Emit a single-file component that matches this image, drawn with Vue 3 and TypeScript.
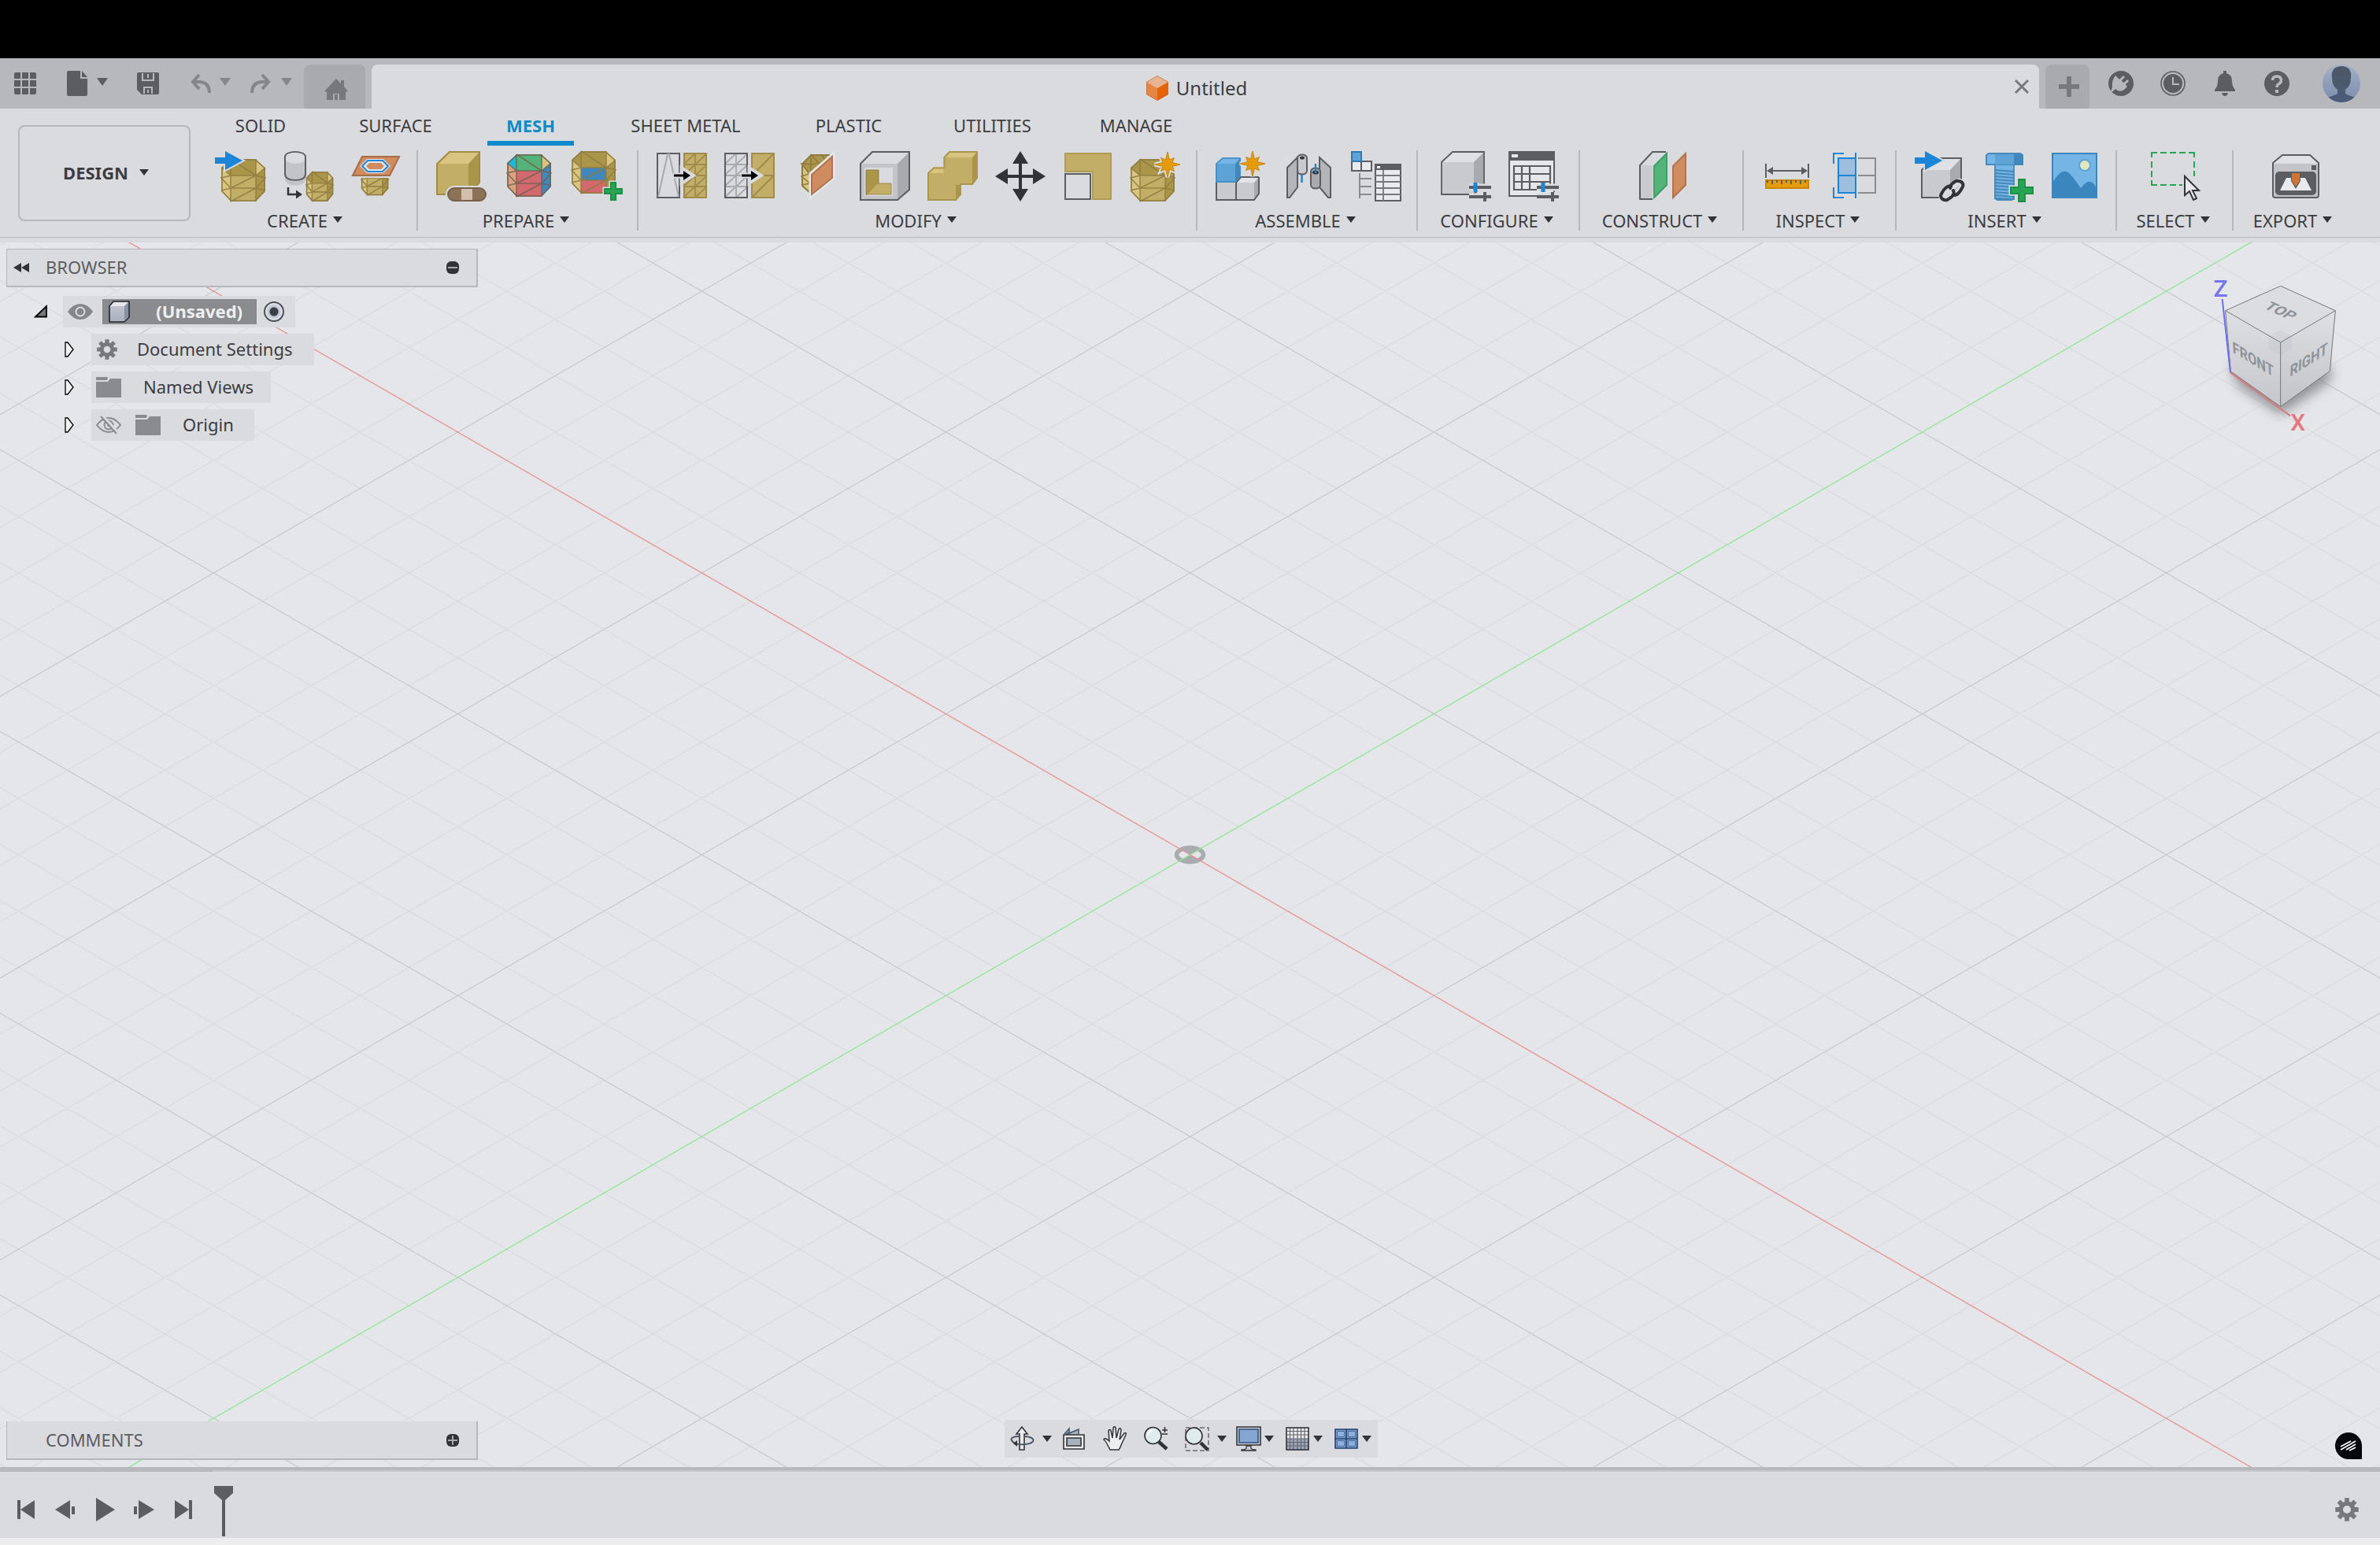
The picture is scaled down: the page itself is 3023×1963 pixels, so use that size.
<script setup lang="ts">
const BG = '#dadbdf'
const INK = '#5c5d61'
const DARK = '#323337'
const GOLD = '#c2ae67'
const GOLD_LIGHT = '#d9c57f'
const GOLD_DARK = '#aa9549'
const GOLD_EDGE = '#8f7c40'
const BLUE = '#1b86d8'

interface MeshColors { tl: string; top: string; tr: string; left: string; f1: string; f2: string; right: string }
const goldMesh: MeshColors = { tl: GOLD_DARK, top: GOLD_DARK, tr: GOLD_LIGHT, left: GOLD_LIGHT, f1: GOLD, f2: GOLD, right: GOLD_DARK }

/* Faceted barrel, 56 x 54 before scaling */
function mesh(x: number, y: number, sx: number, sy: number, c: MeshColors, edge = GOLD_EDGE): string {
  const p = (pts: string, fill: string) => `<polygon points="${pts}" fill="${fill}"/>`
  return `<g transform="translate(${x} ${y}) scale(${sx} ${sy})">` +
    p('0,11 12,21 12,54 0,41', c.left) + p('0,11 12,0 12,21', c.tl) + p('12,0 44,0 44,21 12,21', c.top) +
    p('44,0 56,11 44,21', c.tr) + p('56,11 56,41 44,54 44,21', c.right) +
    p('12,21 44,21 44,37 12,37', c.f1) + p('12,37 44,37 44,54 12,54', c.f2) +
    `<g fill="none" stroke="${edge}" stroke-width="1.6"><path vector-effect="non-scaling-stroke" stroke-opacity=".85" d="M12 0V54M44 0V54M12 21H44M12 37H44M12 37L44 21M12 54L44 37M12 0L44 21M0 11L12 21L0 24L12 37L0 40M56 11L44 21L56 24L44 37L56 40"/>` +
    `<path vector-effect="non-scaling-stroke" d="M12.5 1H43.500L55 11.500V41L43.500 53H12.500L1 41V11.500Z"/></g></g>`
}

function star(cx: number, cy: number): string {
  const pts: string[] = []
  for (let i = 0; i < 16; i++) {
    const r = i % 2 ? 6.5 : i % 4 ? 12 : 16
    const a = (i * Math.PI) / 8
    pts.push(`${(cx + r * Math.sin(a)).toFixed(1)},${(cy - r * Math.cos(a)).toFixed(1)}`)
  }
  const s = pts.join(' ')
  return `<polygon points="${s}" fill="${BG}" stroke="${BG}" stroke-width="5"/><polygon points="${s}" fill="#e59b0b" stroke="#c8860a"/>`
}

const plus = (x: number, y: number, s: number) => {
  const a = s * 0.36, b = s * 0.64
  const d = `M${x + a} ${y}H${x + b}V${y + a}H${x + s}V${y + b}H${x + b}V${y + s}H${x + a}V${y + b}H${x}V${y + a}H${x + a}Z`
  return `<path d="${d}" fill="${BG}" stroke="${BG}" stroke-width="5"/><path d="${d}" fill="#27a553" stroke="#1b8f45" stroke-width="2"/>`
}

const bigArrow = `<path d="M0 8H13V0L35 12L13 24V16H0Z" fill="${BG}" stroke="${BG}" stroke-width="4"/><path d="M0 8H13V0L35 12L13 24V16H0Z" fill="${BLUE}"/>`
const smallArrow = `<path d="M21 31H36M33 24L44 31L33 38Z" stroke="${BG}" stroke-width="7" fill="${BG}"/><path d="M22 31H36" stroke="#000" stroke-width="3"/><path d="M34 25L43 31L34 37Z" fill="#000"/>`
const denseGrid = (x: number) => {
  const xs = [x, x + 15], ys = [3, 17, 31, 45]
  let d = `M${x + 15} 3V59M${x} 17H${x + 30}M${x} 31H${x + 30}M${x} 45H${x + 30}`
  for (const a of xs) for (const b of ys) d += `M${a} ${b + 14}L${a + 15} ${b}`
  return d
}
const sliders = `<path d="M36 46H64M36 58H64M56 52V64M44 40V52" stroke="${BG}" stroke-width="9"/><path d="M36 46H64M36 58H64" stroke="${INK}" stroke-width="4"/><path d="M56 52V64" stroke="${INK}" stroke-width="4"/><path d="M44 40V52" stroke="${BLUE}" stroke-width="5"/>`

const art: Record<string, string> = {
  meshInsert: mesh(8, 10, 1, 1, goldMesh) + bigArrow,
  tessellate: `<path d="M3 8V36C3 46 29 46 29 36V8Z" fill="#c3c4c8"/><ellipse cx="16" cy="9" rx="13" ry="7" fill="${BG}"/><path d="M3 9C3 -1 29 -1 29 9V34C29 40 24 43 16 43S3 40 3 34Z" transform="translate(0 -.5) scale(1 .87)" fill="none" stroke="${INK}" stroke-width="2"/>` +
    mesh(30, 26, 0.61, 0.7, goldMesh) + `<path d="M7 46V55H18" fill="none" stroke="${DARK}" stroke-width="2.500"/><path d="M17 49.500L25 55L17 60.500Z" fill="${DARK}"/>`,
  curveMesh: mesh(14, 20, 0.61, 0.67, goldMesh) + `<path d="M10 4H66L52 34H-2Z" fill="${BG}"/><path d="M15 7H62L50 31H3Z" fill="#d08c5f" stroke="#a66d48" stroke-width="2"/><path d="M22 12H41L48 19L41 26H22L15 19Z" fill="#dbe4ec" stroke="#e6e7ea" stroke-width="4"/><path d="M22 12H41L48 19L41 26H22L15 19Z" fill="none" stroke="${BLUE}" stroke-width="2"/><path d="M24 15H39L43 19L39 23H24L20 19Z" fill="#d08c5f"/>`,
  repair: `<path d="M0 16H41V56H0Z" fill="${GOLD}"/><path d="M0 16L16 0H56L41 16Z" fill="${GOLD_LIGHT}"/><path d="M41 16L56 0V40L41 56Z" fill="${GOLD_DARK}"/><path d="M1 16.500L17 1H55V40L41 55H1Z" fill="none" stroke="#a08b48" stroke-width="2"/><rect x="12" y="44" width="54" height="22" rx="11" fill="${BG}"/><rect x="15" y="47" width="48" height="16" rx="8" fill="#8c7355" stroke="#77604a" stroke-width="2"/><rect x="32" y="48" width="14" height="14" fill="#d2bfad"/>`,
  faceGroups: mesh(4, 4, 1, 1, { tl: '#15bcd4', top: '#54b378', tr: GOLD_LIGHT, left: '#dda27c', f1: '#d3686e', f2: '#d3686e', right: '#3f87bd' }, '#6f6353'),
  addGroup: mesh(0, 0, 1, 1, { ...goldMesh, f1: '#3f87bd', f2: '#d3686e' }) + plus(42, 40, 22),
  remesh: `<rect x="1" y="3" width="28" height="56" fill="${BG}" stroke="${INK}" stroke-width="2"/><path d="M2 58L14 4H16L28 58" fill="none" stroke="#a9aaae" stroke-width="2"/><rect x="35" y="3" width="28" height="56" fill="${GOLD}" stroke="#a08c4c" stroke-width="2"/><path d="${denseGrid(34)}" stroke="#a08c4c" stroke-width="1.800"/>` + smallArrow,
  reduce: `<path d="${denseGrid(0)}" stroke="#a9aaae" stroke-width="1.800"/><rect x="1" y="3" width="28" height="56" fill="none" stroke="${INK}" stroke-width="2"/><rect x="35" y="3" width="28" height="56" fill="${GOLD}" stroke="#a08c4c" stroke-width="2"/><path d="M34 31H64M35 31L63 3M35 59L63 31" stroke="#a08c4c" stroke-width="2"/>` + smallArrow,
  planeCut: `<path d="M12 16L24 30V54L12 44Z" fill="${GOLD_LIGHT}"/><path d="M12 16L24 4H48L23 30Z" fill="${GOLD_DARK}"/><path d="M24 4V28L12 32L23 41L12 43M24 17L34 15L24 4M24 17L12 16L23 30M36 4L42 10" stroke="${GOLD_EDGE}" stroke-width="1.600" fill="none"/><path d="M13 16.500L24.500 5H48M13 16V44L23 53" stroke="${GOLD_EDGE}" stroke-width="2" fill="none"/><path d="M24 29L52 5V34L24 57Z" fill="${BG}" stroke="#e6e7ea" stroke-width="5"/><path d="M25 30L51 7V34L25 55Z" fill="#d08c5f" stroke="#b0744e" stroke-width="2"/>`,
  shell: `<path d="M1 16L16 1H63V49L48 62H1Z" fill="${BG}"/><path d="M48 16L63 1V49L48 62Z" fill="#a9aaae"/><path d="M1 16H48V62H1Z" fill="#c3c4c8"/><path d="M6 21H42V57H6Z" fill="${BG}"/><path d="M8 24H24V41L8 56Z" fill="${GOLD_DARK}" stroke="#8f7c40"/><path d="M22 41H40V55H9Z" fill="${GOLD}" stroke="#a08c4c"/><path d="M1 16L16 1H63V49L48 62H1Z" fill="none" stroke="${INK}" stroke-width="2"/>`,
  combine: `<path d="M0 28L8 20.500H20.500V8L28 0H64V34L57 43H43V55L36 63H0Z" fill="${GOLD}"/><path d="M0 28L8 20.500H20.500V28ZM20.500 8L28 0H64L57 8Z" fill="${GOLD_LIGHT}"/><path d="M57 8L64 0V34L57 43ZM36 43H43V55L36 63Z" fill="${GOLD_DARK}"/><path d="M1 28L8 21.500H21.500V8L28 1H63V34L57 42H42V55L36 62H1Z" fill="none" stroke="#ab9650" stroke-width="2"/>`,
  move: `<path d="M32 10V54M10 32H54" stroke="${DARK}" stroke-width="4"/><path d="M32 0L42 16H22ZM32 64L42 48H22ZM0 32L16 22V42ZM64 32L48 22V42Z" fill="${DARK}"/>`,
  scale: `<path d="M3 3H61V61H38V26H3Z" fill="${GOLD}" stroke="#b19c55" stroke-width="2"/><rect x="3" y="29" width="32" height="32" fill="${BG}" stroke="${INK}" stroke-width="2"/>`,
  convert: mesh(0, 10, 1, 1, goldMesh) + star(47, 17),
  newComponent: `<path d="M1 40H26L32 33H55V54L48 62H1Z" fill="#c9cace"/><path d="M26 40L32 33H55L49 40Z" fill="#e3e4e7"/><path d="M49 40L55 33V54L49 62Z" fill="#a9aaae"/><path d="M1 40V62H49L55 54V33M26 62V40L32 33H55" fill="none" stroke="${INK}" stroke-width="2"/><path d="M0 16H25V40H0Z" fill="#5ea3d6"/><path d="M0 16L9 8H32L25 16Z" fill="#74b5e6"/><path d="M25 16L32 8V32L25 40Z" fill="#3f87bd"/><path d="M1 16L9 9H31M1 16V39H25L31 32V9" fill="none" stroke="#3f8cc4" stroke-width="1.600"/>` + star(47, 16),
  joint: `<g stroke="${INK}" stroke-width="2"><path d="M5 21L18 8V46L8 59H5Z" fill="#b4b5b9"/><path d="M18 9C18 3 30 3 30 9V25C30 31 18 31 18 25Z" fill="#c9cace"/><path d="M60 21L46 8V46L57 59H60Z" fill="#b4b5b9"/><path d="M35 26C35 20 47 20 47 26V43C47 49 35 49 35 43Z" fill="#a9aaae"/></g><ellipse cx="24" cy="8.500" rx="3" ry="2" fill="${DARK}"/><ellipse cx="41" cy="27" rx="4" ry="2.500" fill="${DARK}"/><path d="M23.500 30V40M41 16V28" stroke="${BLUE}" stroke-width="2.500"/>`,
  structure: `<path d="M1 13H26V25H1ZM13 13V25" fill="#e9eaee" stroke="${INK}" stroke-width="2"/><rect x="1" y="1" width="12" height="12" fill="#5ea3d6" stroke="#2f79b3" stroke-width="2"/><path d="M11 28V60M11 35H26M11 45H26M11 55H26" stroke="#8a8b8f" stroke-width="2"/><rect x="31" y="17" width="32" height="46" fill="#e9eaee" stroke="${INK}" stroke-width="2"/><path d="M30 16H64V24H30Z" fill="${INK}"/><path d="M33 19H37V22H33Z" fill="#e9eaee"/><path d="M41 24V63M31 31H63M31 39H63M31 47H63M31 55H63" stroke="#77787c" stroke-width="1.800"/>`,
  configure: `<path d="M1 14H42V55H1Z" fill="#c9cace"/><path d="M1 14L15 1H55L42 14Z" fill="#e0e1e4"/><path d="M42 14L55 1V42L42 55Z" fill="#a9aaae"/><path d="M1 14L15 1H55V42L42 55H1Z" fill="none" stroke="${INK}" stroke-width="1.800"/>` + sliders,
  configTable: `<path d="M1 2H58V57H1Z" fill="#e6e7ea" stroke="${INK}" stroke-width="2"/><path d="M0 0H59V12H0Z" fill="${INK}"/><path d="M4 4H12V8H4Z" fill="#e6e7ea"/><path d="M7 19H53V49H7ZM7 29H53M7 39H53M17 19V49M27 19V49" fill="none" stroke="${INK}" stroke-width="2.200"/>` + sliders,
  offsetPlane: `<path d="M3 18H19V61H3Z" fill="#c9cace"/><path d="M3 18L19 1H38L20 18Z" fill="${BG}"/><path d="M36 1H19L3 18V61H19" fill="none" stroke="${INK}" stroke-width="2"/><path d="M21 19L37 3V43L21 59Z" fill="#54b378" stroke="#3f9f66" stroke-width="2"/><path d="M45 19L61 3V43L45 59Z" fill="#d08c5f" stroke="#b0744e" stroke-width="2"/>`,
  measure: `<path d="M5 16V34M59 16V34" stroke="${INK}" stroke-width="2"/><path d="M8 25H56" stroke="${INK}" stroke-width="2"/><path d="M6 25L14 20V30ZM58 25L50 20V30Z" fill="${INK}"/><rect x="5" y="37" width="54" height="10" fill="#e59b0b" stroke="#c8860a" stroke-width="2"/><path d="M7 37V40M13 37V42M19 37V40M25 37V42M31 37V40M37 37V42M43 37V40M49 37V42M55 37V40" stroke="${INK}" stroke-width="2"/>`,
  section: `<path d="M36 9H58V53H36M36 31H58" fill="none" stroke="#8a8b8f" stroke-width="2"/><path d="M11 9H33V53H11Z" fill="#9dbfdd" stroke="${BLUE}" stroke-width="2"/><path d="M11 31H33M33 2V60M18 3H5V16M5 46V59H18" fill="none" stroke="${BLUE}" stroke-width="2"/>`,
  insertDerive: `<path d="M9 24H45V59H9Z" fill="#c9cace"/><path d="M9 24L24 9H59L45 24Z" fill="#e0e1e4"/><path d="M45 24L59 9V45L45 59Z" fill="#a9aaae"/><path d="M9 59V24L24 9H59V45L45 59Z" fill="none" stroke="${INK}" stroke-width="2"/>` + bigArrow +
    `<g fill="none" stroke-linecap="round"><path d="M47 46L53 41Q57 38 60 41T60 48L52 55M48 45L41 50Q34 55 35 59T42 60L50 54" stroke="${BG}" stroke-width="9"/><g stroke="${DARK}" stroke-width="4"><path d="M45 47C43 44 52 37 55 38C61 38 63 43 60 47C58 51 54 56 50 56"/><path d="M49 50C52 56 45 60 41 62C36 63 31 59 34 54C37 48 42 43 46 45"/></g></g>`,
  fastener: `<path d="M16 17H40V60L37 62H19L16 60Z" fill="#74b5e6" stroke="#4489b9" stroke-width="1.800"/><path d="M15 24L41 26M15 28L41 30M15 32L41 34M15 36L41 38M15 40L41 42M15 44L41 46M15 48L41 50M15 52L41 54M15 56L41 58M15 60L41 61" stroke="#4489b9" stroke-width="2"/><path d="M5 5L8 3H48L51 5V17H5Z" fill="#74b5e6" stroke="#4489b9" stroke-width="2"/><path d="M16 4H40V17H16Z" fill="#5ea3d6"/><path d="M40 4H48L51 6V17H40Z" fill="#3f87bd"/>` + plus(36, 36, 28),
  canvas: `<rect x="3" y="3" width="56" height="56" fill="#74b5e6" stroke="#3a86bd" stroke-width="2"/><path d="M3 40C12 26 16 25 20 26C26 27 32 38 39 47C44 41 47 38 51 39C54 39 57 43 59 48V59H3Z" fill="#3a86bd"/><circle cx="44" cy="18" r="7" fill="#e3e4c0" stroke="#5ea3d6" stroke-width="2"/>`,
  select: `<path d="M1 8V2H8M12 2H20M24 2H32M36 2H44M48 2H55V8M55 13V21M55 25V32M1 13V21M1 25V33M1 37V43H8M12 43H20M24 43H32M36 43H40" fill="none" stroke="#27a553" stroke-width="2"/><path d="M43 32V56L49 51L54 62L58 60L53 50H61Z" fill="#e9eaee" stroke="${DARK}" stroke-width="2"/>`,
  export: `<path d="M3 15L15 5H50L61 15V56Q61 59 58 59H6Q3 59 3 56Z" fill="#e0e1e4"/><path d="M3 16H61V56Q61 59 58 59H6Q3 59 3 56Z" fill="#c3c4c8"/><path d="M3 15L15 5H50L61 15V56Q61 59 58 59H6Q3 59 3 56Z" fill="none" stroke="${INK}" stroke-width="2"/><rect x="52" y="18" width="6" height="6" fill="${INK}"/><rect x="6" y="26" width="52" height="30" rx="5" fill="${INK}"/><path d="M20 34H26V38L32 48L38 38V34H44L52 50H12Z" fill="#e9eaee"/><path d="M27 28H37V38L32 45L27 38Z" fill="#cf7434"/>`,

  apps: `<g fill="${INK}"><rect x="0" y="0" width="28" height="28" rx="2"/></g><path d="M9 0V28M19 0V28M0 9H28M0 19H28" stroke="#b7b8bc" stroke-width="2"/>`,
  file: `<path d="M3 -2H18V8H27V28Q27 30 25 30H3Q1 30 1 28V0Q1 -2 3 -2Z" fill="${INK}"/><path d="M20 -2L27 6H20Z" fill="${INK}"/>`,
  save: `<path d="M2 0H26Q28 0 28 2V26Q28 28 26 28H6L0 22V2Q0 0 2 0Z" fill="${INK}"/><path d="M7 1V10H21V1M14 2V7M9 27V19H19V27M14 22V26" fill="none" stroke="#b7b8bc" stroke-width="2"/>`,
  undo: `<path d="M13 3L5 12L13 21M5 12H14Q26 13 26 26" fill="none" stroke="#85868a" stroke-width="4"/>`,
  redo: `<path d="M15 3L23 12L15 21M23 12H14Q2 13 2 26" fill="none" stroke="#85868a" stroke-width="4"/>`,

  plug: `<circle cx="16" cy="16" r="16" fill="${INK}"/><path d="M9 6L13 10Q16 11 24 20L20 24Q14 28 9 23L2 29L5 21Q4 12 9 6Z" fill="#b7b8bc"/><path d="M15 12L20 7M20 17L25 12" stroke="#b7b8bc" stroke-width="3"/>`,
  clock: `<circle cx="16" cy="16" r="15" fill="none" stroke="${INK}" stroke-width="1.600"/><circle cx="16" cy="16" r="12" fill="${INK}"/><path d="M16 8V17H24" fill="none" stroke="#b7b8bc" stroke-width="2"/>`,
  bell: `<path d="M14 0H18V3Q25 5 25 13Q25 20 29 24V26H3V24Q7 20 7 13Q7 5 14 3ZM12 28H20Q19 32 16 32T12 28Z" fill="${INK}"/>`,
  help: `<circle cx="16" cy="16" r="16" fill="${INK}"/><path d="M10.500 12Q10.500 7 16 7T21.500 12Q21.500 15 18 17Q16 18 16 21" fill="none" stroke="#b7b8bc" stroke-width="3.500"/><path d="M14 24H18V28H14Z" fill="#b7b8bc"/>`,

  first: `<path d="M5 4H9V28H5ZM27 4V28L9 16Z" fill="${INK}"/>`,
  prev: `<path d="M3 16L22 4V28ZM24 12H28V22H24Z" fill="${INK}"/>`,
  play: `<path d="M5 1L29 16L5 31Z" fill="${INK}"/>`,
  next: `<path d="M29 16L9 4V28ZM3 12H7V22H3Z" fill="${INK}"/>`,
  last: `<path d="M23 4H27V28H23ZM5 4V28L23 16Z" fill="${INK}"/>`,

  orbit: `<path d="M13 30V10H9L16 1L23 10H19V30Z" fill="#e9eaee" stroke="${DARK}" stroke-width="1.600"/><path d="M20 13C34 14 34 22 20 23C12 24 5 22 3 18C1 15 6 13 12 13" fill="none" stroke="#4c5866" stroke-width="2"/><path d="M5 22L10 18V26Z" fill="${DARK}"/>`,
  lookAt: `<path d="M4 11L10 3L12 7L22 4V11Z" fill="#a9b2bb"/><path d="M4 10L10 3V8L6 10M8 10L22 4V10" fill="none" stroke="#4c5866" stroke-width="1.500"/><path d="M3 11H29V29H3Z" fill="#e9eaee" stroke="${DARK}" stroke-width="1.600"/><path d="M7 15H25V25H7Z" fill="#a9b2bb" stroke="${DARK}" stroke-width="1.600"/>`,
  pan: `<path d="M10 30C7 24 5 19 2 17C2 15 5 15 9 19L8 6C8 4 11 4 11 6L13 15L14 3C14 0 17 0 17 3L18 15L21 4C22 2 24 3 24 5L22 17L28 9C30 8 31 9 30 11L24 24C23 27 22 29 21 30Z" fill="#edeef0" stroke="${DARK}" stroke-width="1.500"/>`,
  zoom: `<path d="M20 20L30 29" stroke="${DARK}" stroke-width="4.500"/><circle cx="12.500" cy="12" r="10.500" fill="#dfebec" stroke="${DARK}" stroke-width="1.600"/><path d="M6 11Q7 6 12 5" stroke="#fff" stroke-width="2.500" fill="none"/><path d="M24 5H31M27.500 1V8M24 10H31" stroke="${DARK}" stroke-width="1.600"/>`,
  fit: `<rect x="2" y="2" width="29" height="29" fill="none" stroke="#6a6b6f" stroke-width="1.500" stroke-dasharray="6 3"/><path d="M21 21L30 30" stroke="${DARK}" stroke-width="4.500"/><circle cx="12.500" cy="12.500" r="10.500" fill="#dfebec" stroke="${DARK}" stroke-width="1.600"/>`,
  display: `<path d="M1 1H31V24H1Z" fill="#c9cace" stroke="${DARK}" stroke-width="1.600"/><path d="M4 4H28V21H4Z" fill="#86a6d2" stroke="#2f4f80" stroke-width="1.600"/><path d="M13 25H19V28Q20 30 25 30V31H7V30Q12 30 13 28Z" fill="#c9cace" stroke="${DARK}" stroke-width="1.300"/>`,
  grid: `<rect x="2" y="2" width="28" height="28" fill="#e9eaee"/><path d="M2 16H30V30H2Z" fill="#9aa5ba"/><path d="M6.500 2V30M11 2V30M16 2V30M20.500 2V30M25 2V30M2 6.500H30M2 11H30M2 16H30M2 20.500H30M2 25H30" stroke="#66676d" stroke-width="1.200"/><rect x="2" y="2" width="28" height="28" fill="none" stroke="${DARK}" stroke-width="1.600"/>`,
  layout: `<path d="M2 4H30V28H2Z" fill="#7f9fc9" stroke="#20406f" stroke-width="1.600"/><path d="M16 4V28M2 16H30" stroke="#20406f" stroke-width="1.600"/><path d="M4.500 6.500H13.500V13.500H4.500ZM18.500 6.500H27.500V13.500H18.500ZM4.500 18.500H13.500V25.500H4.500ZM18.500 18.500H27.500V25.500H18.500Z" fill="#8eb0dc" stroke="#4a6da0"/>`,
}

const fileTools = [
  { icon: 'apps', label: 'Data panel', width: 66, caret: false, dim: false },
  { icon: 'file', label: 'File', width: 90, caret: true, dim: false },
  { icon: 'save', label: 'Save', width: 66, caret: false, dim: false },
  { icon: 'undo', label: 'Undo', width: 78, caret: true, dim: true },
  { icon: 'redo', label: 'Redo', width: 68, caret: true, dim: true },
]
const statusTools = [
  { icon: 'plug', label: 'Extensions' },
  { icon: 'clock', label: 'Job status' },
  { icon: 'bell', label: 'Notifications' },
  { icon: 'help', label: 'Help' },
]
const ribbonTabs = [
  { name: 'SOLID', width: 110 },
  { name: 'SURFACE', width: 141 },
  { name: 'MESH', width: 110 },
  { name: 'SHEET METAL', width: 192 },
  { name: 'PLASTIC', width: 130 },
  { name: 'UTILITIES', width: 143 },
  { name: 'MANAGE', width: 130 },
]
const activeTab = 'MESH'
const groups = [
  { name: 'CREATE', width: 282, tools: ['meshInsert', 'tessellate', 'curveMesh'] },
  { name: 'PREPARE', width: 280, tools: ['repair', 'faceGroups', 'addGroup'] },
  { name: 'MODIFY', width: 710, tools: ['remesh', 'reduce', 'planeCut', 'shell', 'combine', 'move', 'scale', 'convert'] },
  { name: 'ASSEMBLE', width: 280, tools: ['newComponent', 'joint', 'structure'] },
  { name: 'CONFIGURE', width: 206, tools: ['configure', 'configTable'] },
  { name: 'CONSTRUCT', width: 208, tools: ['offsetPlane'] },
  { name: 'INSPECT', width: 194, tools: ['measure', 'section'] },
  { name: 'INSERT', width: 280, tools: ['insertDerive', 'fastener', 'canvas'] },
  { name: 'SELECT', width: 148, tools: ['select'] },
  { name: 'EXPORT', width: 154, tools: ['export'] },
]
const navTools = [
  { icon: 'orbit', kind: 'wide' }, { icon: 'lookAt', kind: 'plain' }, { icon: 'pan', kind: 'plain' },
  { icon: 'zoom', kind: 'plain' }, { icon: 'fit', kind: 'wide' }, { icon: 'display', kind: 'tight' },
  { icon: 'grid', kind: 'tight' }, { icon: 'layout', kind: 'tight' },
]
const playback = ['first', 'prev', 'play', 'next', 'last']

/* Isometric ground grid around the origin; every fifth line is major */
const STEP = 71.6
const SLOPE = 0.5774
const REACH = 4000
const range = Array.from({ length: 101 }, (_, i) => i - 50).filter((k) => k !== 0)
const gridPath = (ks: number[]) =>
  ks.map((k) => {
    const c = k * STEP
    const h = REACH * SLOPE
    return `M${-REACH} ${(c - h).toFixed(1)}L${REACH} ${(c + h).toFixed(1)}M${-REACH} ${(c + h).toFixed(1)}L${REACH} ${(c - h).toFixed(1)}`
  }).join('')
const minorLines = gridPath(range.filter((k) => k % 5 !== 0))
const majorLines = gridPath(range.filter((k) => k % 5 === 0))
const axisEnd = REACH * SLOPE

const gearPath = (() => {
  const pts: string[] = []
  for (let i = 0; i < 8; i++) {
    for (const [off, r] of [[-16, 10.5], [-11, 15], [11, 15], [16, 10.5]] as const) {
      const a = ((i * 45 + off) * Math.PI) / 180
      pts.push(`${(16 + r * Math.sin(a)).toFixed(1)} ${(16 - r * Math.cos(a)).toFixed(1)}`)
    }
  }
  return `M${pts.join('L')}ZM16 11a5 5 0 1 0 0 10a5 5 0 1 0 0 -10Z`
})()
</script>

<template>
  <div class="app">
    <div class="bezel"></div>

    <header class="titlebar">
      <nav class="file-tools" aria-label="File">
        <button v-for="t in fileTools" :key="t.icon" class="file-tool" :style="{ width: t.width + 'px' }" :aria-label="t.label">
          <svg class="i28" viewBox="0 0 28 28" v-html="art[t.icon]"></svg>
          <span v-if="t.caret" class="caret-lg" :class="{ dim: t.dim }"></span>
        </button>
      </nav>
      <button class="side-tab home" aria-label="Home">
        <svg width="32" height="28" viewBox="0 0 32 28"><path d="M16 0L22 6V2H26V10L31 16L28 17V27H20V19H12V27H4V17L1 16Z" fill="#77787c" /><path d="M14 20H18V27H14Z" fill="#77787c" /></svg>
      </button>
      <div class="doc-tab">
        <div class="doc-title">
          <svg width="28" height="32" viewBox="0 0 28 32"><path d="M14 0L28 8L14 16L0 8Z" fill="#e6b493" /><path d="M0 8L14 16V32L0 24Z" fill="#e58744" /><path d="M28 8L14 16V32L28 24Z" fill="#e5640a" /><path d="M14 .5L27.500 8.200V23.800L14 31.500L.5 23.800V8.200Z" fill="none" stroke="#c96a2c" stroke-opacity=".7" /></svg>
          <span>Untitled</span>
        </div>
        <button class="close" aria-label="Close">
          <svg width="20" height="20" viewBox="0 0 20 20"><path d="M2 2L18 18M18 2L2 18" stroke="#77787c" stroke-width="3" /></svg>
        </button>
      </div>
      <button class="side-tab new" aria-label="New tab">
        <svg width="26" height="26" viewBox="0 0 26 26"><path d="M13 0V26M0 13H26" stroke="#77787c" stroke-width="6" /></svg>
      </button>
      <div class="status-tools">
        <button v-for="s in statusTools" :key="s.icon" :aria-label="s.label">
          <svg class="i32" viewBox="0 0 32 32" v-html="art[s.icon]"></svg>
        </button>
        <button class="avatar" aria-label="Account">
          <svg width="48" height="48" viewBox="0 0 48 48">
            <defs>
              <linearGradient id="av" x1="0" y1="0" x2="0" y2="1"><stop offset="0" stop-color="#a2b1c8" /><stop offset="1" stop-color="#7b8cab" /></linearGradient>
              <linearGradient id="avh" x1="0" y1="0" x2="0" y2="1"><stop offset="0" stop-color="#4c5664" /><stop offset="1" stop-color="#4b5c7a" /></linearGradient>
              <clipPath id="avc"><circle cx="24" cy="24" r="24" /></clipPath>
            </defs>
            <g clip-path="url(#avc)"><rect width="48" height="48" fill="url(#av)" /><path d="M19 32Q12 27 12 17Q10 3 24 2Q38 3 36 17Q36 27 29 32V37Q34 40 43 42V48H5V42Q14 40 19 37Z" fill="url(#avh)" /></g>
          </svg>
        </button>
      </div>
    </header>

    <section class="ribbon">
      <button class="workspace">DESIGN <span class="caret"></span></button>
      <div class="ribbon-main">
        <nav class="tabs" aria-label="Toolbar tabs">
          <button v-for="t in ribbonTabs" :key="t.name" :class="{ active: t.name === activeTab }" :style="{ width: t.width + 'px' }">{{ t.name }}</button>
        </nav>
        <div class="groups">
          <div v-for="g in groups" :key="g.name" class="group" :style="{ width: g.width + 'px' }">
            <div class="tools">
              <button v-for="i in g.tools" :key="i" :aria-label="i">
                <svg class="i64" viewBox="0 0 64 64" v-html="art[i]"></svg>
              </button>
            </div>
            <button class="group-label">{{ g.name }}<span class="caret"></span></button>
          </div>
        </div>
      </div>
    </section>

    <main class="viewport">
      <svg class="ground" width="100%" height="100%" aria-hidden="true">
        <svg x="50%" y="50%" overflow="visible">
          <g fill="none">
            <path :d="minorLines" stroke="#dadce0" stroke-width="1.300" />
            <path :d="majorLines" stroke="#c8cace" stroke-width="1.300" />
            <ellipse rx="17" ry="9" stroke="#a9abaf" stroke-width="5.500" />
            <path d="M0 0L-12 -7Q0 -11 12 -7ZM0 0L-12 7Q0 11 12 7Z" fill="#a9abaf" />
            <path :d="`M${-REACH} ${-axisEnd}L${REACH} ${axisEnd}`" stroke="#e99296" stroke-width="1.300" />
            <path :d="`M${-REACH} ${axisEnd}L${REACH} ${-axisEnd}`" stroke="#92e695" stroke-width="1.300" />
          </g>
        </svg>
      </svg>

      <aside class="browser">
        <div class="panel">
          <svg class="rewind" width="20" height="12" viewBox="0 0 20 12"><path d="M0 6L10 0V12ZM10 6L20 0V12Z" fill="#323337" /></svg>
          <span class="panel-name">BROWSER</span>
          <button aria-label="Collapse"><svg width="16" height="16" viewBox="0 0 16 16"><rect width="16" height="16" rx="6" fill="#323337" /><path d="M2 8H14" stroke="#a9aaae" stroke-width="2" /></svg></button>
        </div>
        <ul class="tree">
          <li class="root">
            <svg class="twist" width="16" height="16" viewBox="0 0 16 16"><path d="M1 14.500L15 1V14.500Z" fill="#77787c" stroke="#000" stroke-width="1.800" /></svg>
            <div class="node">
              <svg width="32" height="20" viewBox="0 0 32 20"><path d="M0 10Q7 0 16 0T32 10Q25 20 16 20T0 10Z" fill="#85868a" /><ellipse cx="16" cy="10" rx="5.500" ry="5.500" fill="none" stroke="#dadbdf" stroke-width="2" /></svg>
              <span class="picked">
                <svg width="28" height="28" viewBox="0 0 28 28"><defs><linearGradient id="cb" x1="0" y1="0" x2="0" y2="1"><stop offset="0" stop-color="#c5cad2" /><stop offset="1" stop-color="#a9b0bd" /></linearGradient></defs><path d="M1 7L6 1H26V21L20 27H1Z" fill="url(#cb)" stroke="#22262c" stroke-width="1.600" stroke-linejoin="round" /><path d="M2 7L7 2H25L20 7Z" fill="#e6e8ec" /><path d="M20 7L25 2V21L20 26Z" fill="#88919f" /></svg>
                <b>(Unsaved)</b>
              </span>
              <input type="radio" name="active-component" checked aria-label="Activate component" />
            </div>
          </li>
          <li>
            <svg class="twist" width="12" height="20" viewBox="0 0 12 20"><path d="M1 1H4L11 10L4 19H1Z" fill="#f0f1f3" stroke="#000" stroke-width="1.300" /></svg>
            <div class="node settings">
              <svg width="28" height="28" viewBox="0 0 32 32"><path :d="gearPath" fill="#77787c" fill-rule="evenodd" /></svg>
              <span>Document Settings</span>
            </div>
          </li>
          <li>
            <svg class="twist" width="12" height="20" viewBox="0 0 12 20"><path d="M1 1H4L11 10L4 19H1Z" fill="#f0f1f3" stroke="#000" stroke-width="1.300" /></svg>
            <div class="node views">
              <svg width="32" height="26" viewBox="0 0 32 26"><path d="M0 0H13Q16 0 14 4H0ZM0 6H15L18 2H32V26H0Z" fill="#8a8b8f" /></svg>
              <span>Named Views</span>
            </div>
          </li>
          <li>
            <svg class="twist" width="12" height="20" viewBox="0 0 12 20"><path d="M1 1H4L11 10L4 19H1Z" fill="#f0f1f3" stroke="#000" stroke-width="1.300" /></svg>
            <div class="node origin">
              <svg width="32" height="22" viewBox="0 0 32 22"><path d="M1 11Q8 2 16 2T31 11Q24 20 16 20T1 11Z" fill="none" stroke="#8a8b8f" stroke-width="2" /><circle cx="16" cy="11" r="5.500" fill="none" stroke="#8a8b8f" stroke-width="2" /><circle cx="16" cy="11" r="2" fill="#8a8b8f" /><path d="M8 -1L28 20" stroke="#dadbdf" stroke-width="3" /><path d="M6 0L26 22" stroke="#8a8b8f" stroke-width="2" /></svg>
              <svg width="32" height="26" viewBox="0 0 32 26"><path d="M0 0H13Q16 0 14 4H0ZM0 6H15L18 2H32V26H0Z" fill="#8a8b8f" /></svg>
              <span>Origin</span>
            </div>
          </li>
        </ul>
      </aside>

      <svg class="viewcube" width="323" height="280" viewBox="0 0 969 840" role="img" aria-label="View cube">
        <defs>
          <filter id="soft" x="-50%" y="-50%" width="200%" height="200%"><feGaussianBlur stdDeviation="22" /></filter>
          <linearGradient id="lf" x1="0" y1="0" x2="0" y2="1"><stop offset="0" stop-color="#dedfe2" /><stop offset="1" stop-color="#c6c7ca" /></linearGradient>
          <linearGradient id="rf" x1="0" y1="0" x2="0" y2="1"><stop offset="0" stop-color="#dfe0e3" /><stop offset="1" stop-color="#c2c3c6" /></linearGradient>
        </defs>
        <path d="M400 500L590 400L790 510L770 560L590 680L430 570Z" fill="#77787c" opacity=".75" filter="url(#soft)" />
        <path d="M380 284L590 405V650L400 515Z" fill="url(#lf)" />
        <path d="M799 284L590 405V650L778 514Z" fill="url(#rf)" />
        <path d="M590 190L799 284L590 405L380 284Z" fill="#dcdde1" />
        <path d="M590 358L633 382V430L590 455L545 430V382Z" fill="#b4bbc6" opacity=".25" />
        <path d="M590 190L799 284L778 514L590 650L400 515L380 284ZM380 284L590 405L799 284M590 405V650" fill="none" stroke="#77787c" stroke-width="3" />
        <path d="M368 240L399 520" stroke="#6c6ee8" stroke-width="6" />
        <path d="M399 520L627 685" stroke="#d77a80" stroke-width="6" />
        <g class="face">
          <text transform="matrix(.82 .5 .06 1 486 482)" text-anchor="middle" y="8">FRONT</text>
          <text transform="matrix(.82 -.52 -.04 1 697 482)" text-anchor="middle" y="10">RIGHT</text>
          <text transform="matrix(.9 .42 -.72 .6 592 284)" text-anchor="middle" y="22">TOP</text>
        </g>
        <text x="362" y="230" class="axis" text-anchor="middle" fill="#7476ea">Z</text>
        <text x="656" y="740" class="axis" text-anchor="middle" fill="#e97479">X</text>
      </svg>

      <div class="comments panel">
        <span class="panel-name">COMMENTS</span>
        <button aria-label="Expand"><svg width="16" height="16" viewBox="0 0 16 16"><rect width="16" height="16" rx="6" fill="#323337" /><path d="M2 8H14M8 2V14" stroke="#a9aaae" stroke-width="2" /></svg></button>
      </div>

      <nav class="navbar" aria-label="Navigation">
        <button v-for="n in navTools" :key="n.icon" :class="n.kind" :aria-label="n.icon">
          <svg class="i32" viewBox="0 0 32 32" v-html="art[n.icon]"></svg>
          <span v-if="n.kind !== 'plain'" class="caret"></span>
        </button>
      </nav>

      <button class="assistant" aria-label="Assistant">
        <svg width="34" height="34" viewBox="0 0 34 34"><path d="M17 0A17 17 0 0 1 34 17V34H17A17 17 0 0 1 17 0Z" fill="#05070b" /><path d="M7 18L20 11M7 22L26 11M14 22L26 15M18 23L26 19" stroke="#fff" stroke-width="1.800" /></svg>
      </button>
    </main>

    <footer class="timeline">
      <div class="edge"><span></span></div>
      <div class="timeline-row">
        <button v-for="p in playback" :key="p" :aria-label="p"><svg class="i32" viewBox="0 0 32 32" v-html="art[p]"></svg></button>
        <button class="marker" aria-label="Timeline marker"><svg width="24" height="64" viewBox="0 0 24 64"><path d="M0 0H24V9L14 18V64H10V18L0 9Z" fill="#5c5d61" /></svg></button>
        <button class="settings-btn" aria-label="Timeline settings"><svg class="i32" viewBox="0 0 32 32"><path :d="gearPath" fill="#77787c" fill-rule="evenodd" /></svg></button>
      </div>
    </footer>
    <div class="desk"></div>
  </div>
</template>

<style>
body { margin: 0; background: #eeeeee; }
</style>

<style scoped>
.app {
  display: flex; flex-direction: column; min-height: 100vh;
  font: 22px/32px "Noto Sans", "Open Sans", sans-serif; color: #3c3d41; background: #dadbdf;
}
button { border: 0; margin: 0; padding: 0; background: none; font: inherit; color: inherit; display: flex; align-items: center; }
svg { display: block; flex: none; overflow: visible; }
.i28 { width: 28px; height: 28px; }
.i32 { width: 32px; height: 32px; }
.i64 { width: 64px; height: 64px; }
.caret { flex: none; border: 6px solid transparent; border-top: 8px solid #323337; border-bottom: 0; }
.caret-lg { border: 7px solid transparent; border-top: 10px solid #5c5d61; border-bottom: 0; margin-left: 11px; margin-bottom: 4px; }
.caret-lg.dim { border-top-color: #85868a; }

.bezel { height: 74px; background: #000; flex: none; }

.titlebar { display: flex; align-items: flex-end; height: 64px; background: #b7b8bc; flex: none; }
.file-tools { display: flex; align-self: stretch; padding-left: 18px; }
.side-tab { height: 56px; justify-content: center; background: #a9aaae; border-radius: 8px 8px 0 0; flex: none; }
.home { width: 78px; margin-right: 8px; padding: 8px 0 0 4px; box-sizing: border-box; }
.new { width: 56px; margin-left: 8px; padding-left: 4px; box-sizing: border-box; }
.doc-tab { flex: 1; display: flex; align-items: center; height: 56px; background: #dadbdf; border-radius: 8px 8px 0 0; }
.doc-title { flex: 1; display: flex; align-items: center; justify-content: center; gap: 10px; padding: 3px 0 0 12px; font-size: 24px; }
.close { width: 34px; padding-left: 2px; box-sizing: border-box; }
.status-tools { display: flex; align-items: center; align-self: stretch; gap: 34px; padding: 0 25px 0 24px; }
.avatar { margin-left: 8px; }

.ribbon { display: flex; height: 163px; border-bottom: 1px solid #b7b8bc; margin-bottom: 6px; flex: none; }
.workspace {
  width: 219px; height: 122px; margin: 21px 7px 0 23px; flex: none; box-sizing: border-box; padding: 0 0 3px 4px;
  border: 2px solid #b7b8bc; border-radius: 8px; justify-content: center; gap: 14px; font-weight: 700;
}
.tabs { display: flex; gap: 46px; padding-left: 27px; }
.tabs button { height: 47px; padding-bottom: 5px; box-sizing: border-box; justify-content: center; white-space: nowrap; position: relative; }
.tabs .active { color: #0b8bcb; font-weight: 700; }
.tabs .active::after { content: ""; position: absolute; left: 0; right: 0; bottom: 0; height: 6px; background: #0b8bcb; }
.groups { display: flex; padding-top: 6px; }
.group { height: 102px; box-sizing: border-box; padding: 1px 0 0 4px; border-right: 2px solid #b7b8bc; display: flex; flex-direction: column; align-items: center; }
.group:last-child { border-right: 0; }
.tools { display: flex; gap: 22px; }
.group-label { gap: 7px; margin: 8px 8px 0 0; white-space: nowrap; }
.group-label .caret { margin-bottom: 2px; }

.viewport { flex: 1; position: relative; display: flex; flex-direction: column; justify-content: space-between; background: #e4e6ea; overflow: hidden; }
.ground { position: absolute; inset: 0; }
.browser { position: relative; padding: 8px 0 0 8px; }
.panel {
  width: 599px; height: 49px; box-sizing: border-box; display: flex; align-items: center; padding: 0 22px 0 8px;
  background: #dadbdf; border: solid #b7b8bc; border-width: 1px 2px 2px 1px; color: #5c5d61;
}
.rewind { margin-right: 21px; }
.panel-name { flex: 1; padding-bottom: 2px; }
.comments { position: relative; margin: 0 0 9px 8px; border-top: 0; padding-left: 49px; }

.tree { list-style: none; margin: 11px 0 0; padding: 0; display: flex; flex-direction: column; gap: 8px; }
.tree li { display: flex; align-items: center; height: 40px; padding-left: 74px; }
.tree .root { padding-left: 36px; }
.twist { margin-right: 22px; }
.tree .root .twist { margin-right: 20px; }
.node { display: flex; align-items: center; height: 40px; background: #dadbdf; padding: 0 26px 0 6px; white-space: nowrap; }
.node span { padding-bottom: 3px; }
.root .node { padding: 0 14px 0 6px; }
.root .node .picked { display: flex; align-items: center; height: 32px; width: 196px; box-sizing: border-box; margin: 0 9px 0 12px; padding: 0 18px 0 8px; justify-content: space-between; background: #8a8b8f; color: #eeeff1; }
.picked b { padding-bottom: 2px; }
.node input {
  appearance: none; width: 26px; height: 26px; margin: 0; border: 2px solid #4c5058; border-radius: 50%;
  background: radial-gradient(circle, #3c3f45 0 5px, #b7bfcc 6px, #e6e9ee 11px);
}
.settings span { margin-left: 24px; }
.views span { margin-left: 28px; }
.views { padding-right: 22px; }
.origin svg + svg { margin-left: 18px; }
.origin span { margin-left: 28px; }
.settings { padding-right: 28px; }

.viewcube { position: absolute; top: -8px; right: 0; font-family: Roboto, "Noto Sans", sans-serif; }
.face text { font-size: 60px; font-weight: 700; fill: #8e9399; }
.axis { font-size: 90px; font-weight: 500; }

.navbar { position: absolute; left: 50%; bottom: 12px; transform: translateX(-50%); margin-left: 1px; display: flex; height: 48px; padding-left: 6px; background: #dadbdf; }
.navbar .plain { width: 52px; }
.navbar .wide { width: 66px; gap: 10px; }
.navbar .tight { width: 62px; gap: 4px; }
.navbar .tight:last-child { width: 56px; }
.assistant { position: absolute; right: 23px; bottom: 10px; }

.timeline { flex: none; height: 90px; }
.edge { height: 6px; background: #b7b8bc; display: flex; align-items: flex-end; padding: 0 89px 0 270px; box-sizing: border-box; }
.edge span { flex: 1; height: 2px; background: #c8c9cd; }
.timeline-row { display: flex; align-items: center; gap: 18px; height: 84px; padding: 12px 26px 0 17px; box-sizing: border-box; }
.timeline-row .marker { margin: 4px 0 0 5px; }
.settings-btn { margin-left: auto; }
.desk { height: 9px; background: #eeeeee; flex: none; }
</style>
